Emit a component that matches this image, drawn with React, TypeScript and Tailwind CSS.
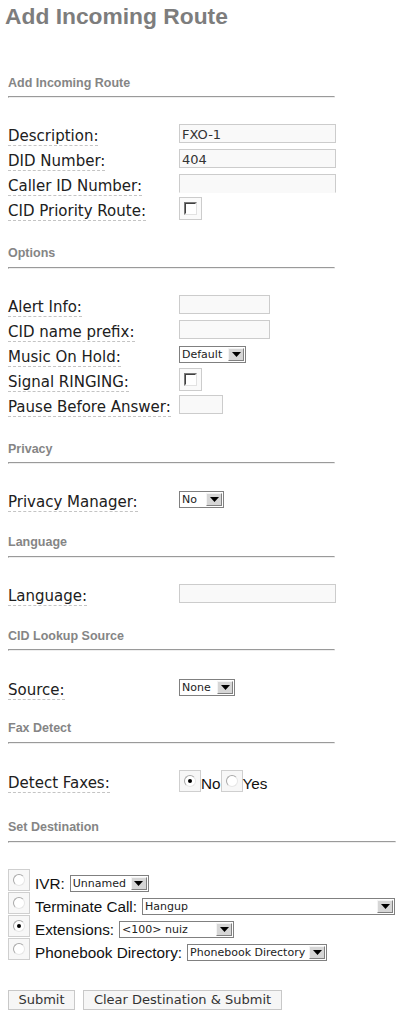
import React from "react";

const DV = "font-['DejaVu_Sans',Verdana,sans-serif]";
const AR = "font-['Liberation_Sans',Arial,sans-serif]";

function Header({ title, mt, hrMt, wide }: { title: string; mt: string; hrMt: string; wide?: boolean }) {
  return (
    <div className={mt}>
      <div className={`${AR} h-[15px] text-[12.5px] leading-[15px] font-bold text-[#858585]`}>{title}</div>
      <div
        className={`${hrMt} h-[2px] border-t border-l border-[#9a9a9a] border-b border-r border-b-[#eeeeee] border-r-[#eeeeee] ${
          wide ? "w-[388px]" : "w-[327px]"
        }`}
      />
    </div>
  );
}

function Label({ text }: { text: string }) {
  return (
    <div className="w-[171px] shrink-0 pt-[3px]">
      <span className={`${DV} inline-block border-b border-dashed border-[#c4c4c4] text-[15px] leading-[17px] text-[#202020]`}>
        {text}
      </span>
    </div>
  );
}

function Row({ label, children, h = "h-[25px]" }: { label: string; children: React.ReactNode; h?: string }) {
  return (
    <div className={`flex items-center ${h}`}>
      <Label text={label} />
      {children}
    </div>
  );
}

function Input({ w, value, noBottom }: { w: string; value?: string; noBottom?: boolean }) {
  return (
    <div
      className={`${w} h-[19px] border border-[#cccccc] bg-[#f9f9f9] pl-[2px] flex items-center ${
        noBottom ? "border-b-transparent" : ""
      }`}
    >
      <span className={`${DV} text-[13px] leading-[15px] text-[#333] pt-[1px]`}>{value}</span>
    </div>
  );
}

function Arrow() {
  return (
    <span className="w-[16px] h-[13px] mr-[1px] shrink-0 flex items-center justify-center bg-[#d6d6d6] border border-t-[#f4f4f4] border-l-[#f4f4f4] border-r-[#808080] border-b-[#808080]">
      <svg width="9" height="5" viewBox="0 0 9 5">
        <polygon points="0,0 9,0 4.5,5" fill="#000" />
      </svg>
    </span>
  );
}

function Select({ w, value }: { w: string; value: string }) {
  return (
    <div className={`${w} h-[17px] shrink-0 border border-[#808080] bg-white flex items-center`}>
      <span className={`${DV} text-[11px] flex-1 pl-[2px] leading-[13px] text-[#222] whitespace-nowrap overflow-hidden`}>{value}</span>
      <Arrow />
    </div>
  );
}

function Checkbox() {
  return (
    <div className="w-[23px] h-[23px] border border-[#cccccc] bg-[#fafafa] flex items-center justify-center">
      <div className="w-[13px] h-[13px] border border-t-[#7a7a7a] border-l-[#7a7a7a] border-r-[#e2e2e2] border-b-[#e2e2e2] bg-white">
        <div className="w-full h-full border border-t-[#404040] border-l-[#404040] border-r-white border-b-white bg-white" />
      </div>
    </div>
  );
}

function Radio({ checked }: { checked?: boolean }) {
  return (
    <div className="w-[22px] h-[22px] shrink-0 border border-[#cfcfcf] bg-[#f7f7f7] flex items-center justify-center">
      <div className="w-[12px] h-[12px] rounded-full border border-t-[#a8a8a8] border-l-[#a8a8a8] border-r-[#e6e6e6] border-b-[#e6e6e6] bg-white flex items-center justify-center">
        {checked ? <div className="w-[4px] h-[4px] rounded-full bg-black" /> : null}
      </div>
    </div>
  );
}

function DestRow({ checked, label, children }: { checked?: boolean; label: string; children: React.ReactNode }) {
  return (
    <div className="flex items-end h-[23px]">
      <div className="self-start">
        <Radio checked={checked} />
      </div>
      <span className={`${AR} ml-[5px] text-[15.3px] leading-[17px] text-[#111]`}>{label}</span>
      <div className="ml-[5px]">{children}</div>
    </div>
  );
}

export default function App() {
  return (
    <div className="min-h-[1013px] w-[401px] bg-white">
      <div className={`${AR} mt-[4px] pl-[5px] h-[24px] text-[22.8px] leading-[24px] font-bold text-[#7d7d7d]`}>
        Add Incoming Route
      </div>
      <div className="pl-[8px] pb-[3px]">
        <Header title="Add Incoming Route" mt="mt-[48px]" hrMt="mt-[5px]" />
        <div className="mt-[23px]">
          <Row label="Description:">
            <Input w="w-[157px]" value="FXO-1" />
          </Row>
          <Row label="DID Number:">
            <Input w="w-[157px]" value="404" />
          </Row>
          <Row label="Caller ID Number:">
            <Input w="w-[157px]" noBottom />
          </Row>
          <Row label="CID Priority Route:">
            <Checkbox />
          </Row>
        </div>

        <Header title="Options" mt="mt-[25px]" hrMt="mt-[6px]" />
        <div className="mt-[23px]">
          <Row label="Alert Info:">
            <Input w="w-[91px]" />
          </Row>
          <Row label="CID name prefix:">
            <Input w="w-[91px]" />
          </Row>
          <Row label="Music On Hold:">
            <Select w="w-[67px]" value="Default" />
          </Row>
          <Row label="Signal RINGING:">
            <Checkbox />
          </Row>
          <Row label="Pause Before Answer:">
            <Input w="w-[44px]" />
          </Row>
        </div>

        <Header title="Privacy" mt="mt-[25px]" hrMt="mt-[5px]" />
        <div className="mt-[23px]">
          <Row label="Privacy Manager:">
            <Select w="w-[45px]" value="No" />
          </Row>
        </div>

        <Header title="Language" mt="mt-[23px]" hrMt="mt-[6px]" />
        <div className="mt-[23px]">
          <Row label="Language:" h="h-[24px]">
            <Input w="w-[157px]" />
          </Row>
        </div>

        <Header title="CID Lookup Source" mt="mt-[24px]" hrMt="mt-[5px]" />
        <div className="mt-[24px]">
          <Row label="Source:">
            <Select w="w-[56px]" value="None" />
          </Row>
        </div>

        <Header title="Fax Detect" mt="mt-[21px]" hrMt="mt-[6px]" />
        <div className="mt-[24px]">
          <Row label="Detect Faxes:">
            <div className="flex items-end">
              <Radio checked />
              <span className={`${AR} text-[15.3px] leading-[17px] text-[#111]`}>No</span>
              <Radio />
              <span className={`${AR} text-[15.3px] leading-[17px] text-[#111]`}>Yes</span>
            </div>
          </Row>
        </div>

        <Header title="Set Destination" mt="mt-[27px]" hrMt="mt-[6px]" wide />
        <div className="mt-[26px]">
          <DestRow label="IVR:">
            <Select w="w-[79px]" value="Unnamed" />
          </DestRow>
          <DestRow label="Terminate Call:">
            <Select w="w-[253px]" value="Hangup" />
          </DestRow>
          <DestRow label="Extensions:" checked>
            <Select w="w-[115px]" value="<100> nuiz" />
          </DestRow>
          <DestRow label="Phonebook Directory:">
            <Select w="w-[140px]" value="Phonebook Directory" />
          </DestRow>
        </div>

        <div className="mt-[29px] flex gap-[8px]">
          <button
            className={`${DV} w-[67px] h-[20px] border border-[#c8c8c8] bg-[#f6f6f6] text-[13px] leading-[16px] text-[#333] text-center`}
          >
            Submit
          </button>
          <button
            className={`${DV} w-[199px] h-[20px] border border-[#c8c8c8] bg-[#f6f6f6] text-[13px] leading-[16px] text-[#333] text-center`}
          >
            Clear Destination &amp; Submit
          </button>
        </div>
      </div>
    </div>
  );
}
